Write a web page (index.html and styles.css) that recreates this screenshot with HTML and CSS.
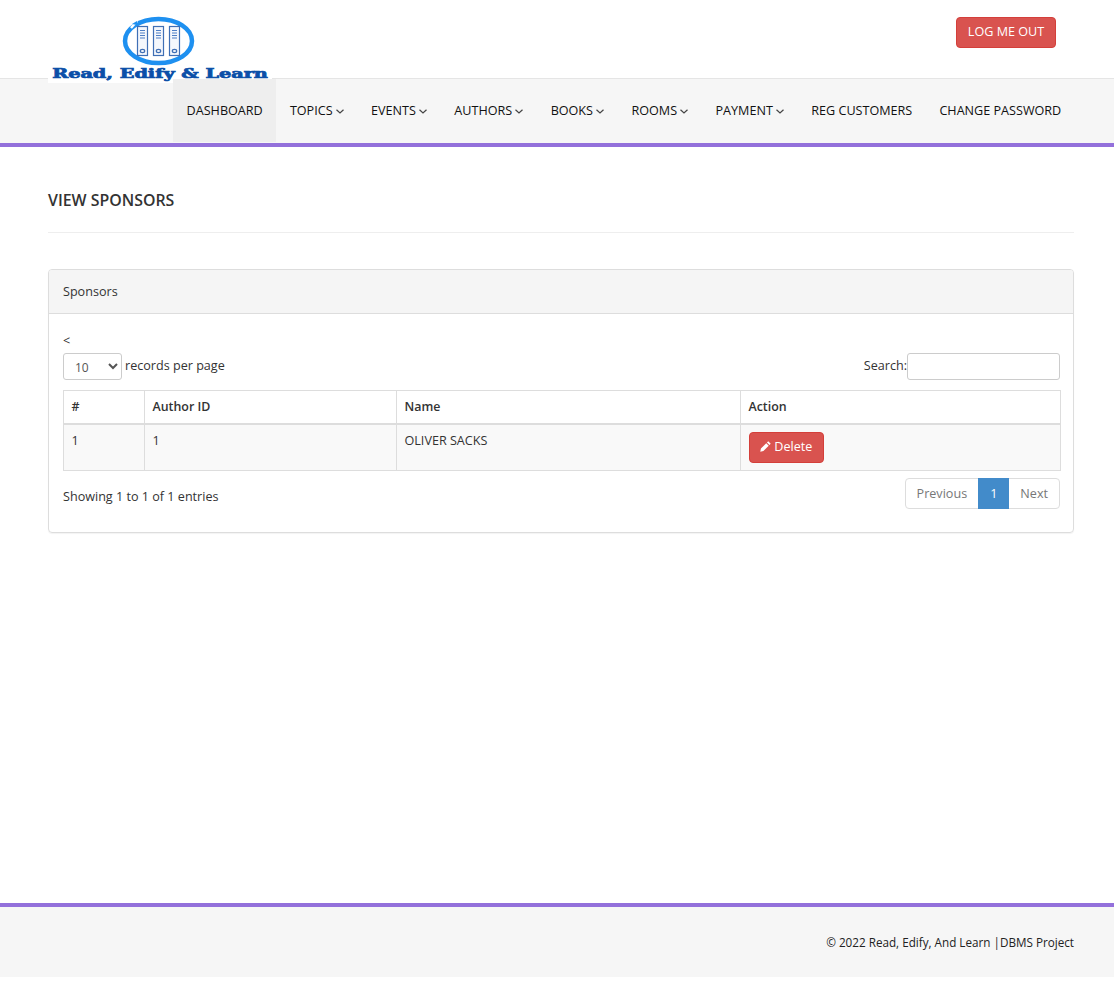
FILE: index.html

```html
<!DOCTYPE html>
<html>

<head>
    <title>View Sponsors</title>
    <link rel="stylesheet" href="styles.css">
</head>

<body>
    <!-- Logo and logout -->
    <header class="top-bar">
        <div class="logo">
            <svg class="logo-mark" width="74" height="52" viewBox="0 0 74 52">
                <ellipse cx="36.500" cy="25" rx="33.500" ry="22" fill="none" stroke="#1e90f0" stroke-width="4.500"/>
                <path d="M9 12 15 5" stroke="#fff" stroke-width="2.500"/>
                <path d="M10 8 15 5 15 9z" fill="#1e90f0"/>
                <g fill="#f4f7fc" stroke="#3f6fb5" stroke-width="1.200">
                    <rect x="15.500" y="10.500" width="10" height="29"/>
                    <rect x="31.500" y="10.500" width="10" height="29"/>
                    <rect x="47.500" y="10.500" width="10" height="29"/>
                </g>
                <g stroke="#4f7fc5" stroke-width="1">
                    <path d="M18 14.500h5M18 17h5M18 19.500h5M18 22h5"/>
                    <path d="M34 14.500h5M34 17h5M34 19.500h5M34 22h5"/>
                    <path d="M50 14.500h5M50 17h5M50 19.500h5M50 22h5"/>
                </g>
                <g fill="none" stroke="#3f6fb5" stroke-width="1.200">
                    <ellipse cx="20.500" cy="35" rx="2.200" ry="1.600"/>
                    <ellipse cx="36.500" cy="35" rx="2.200" ry="1.600"/>
                    <ellipse cx="52.500" cy="35" rx="2.200" ry="1.600"/>
                </g>
            </svg>
            <div class="logo-text">Read, Edify &amp; Learn</div>
        </div>
        <a class="btn btn-logout" href="#">LOG ME OUT</a>
    </header>

    <!-- Main menu -->
    <nav class="menu-bar">
        <ul class="menu">
            <li class="active"><a href="#">DASHBOARD</a></li>
            <li><a href="#">TOPICS <svg class="caret" width="8" height="5" viewBox="0 0 8 5"><path d="M.5.7 4 4 7.500.7" fill="none" stroke="#444" stroke-width="1.200"/></svg></a></li>
            <li><a href="#">EVENTS <svg class="caret" width="8" height="5" viewBox="0 0 8 5"><path d="M.5.7 4 4 7.500.7" fill="none" stroke="#444" stroke-width="1.200"/></svg></a></li>
            <li><a href="#">AUTHORS <svg class="caret" width="8" height="5" viewBox="0 0 8 5"><path d="M.5.7 4 4 7.500.7" fill="none" stroke="#444" stroke-width="1.200"/></svg></a></li>
            <li><a href="#">BOOKS <svg class="caret" width="8" height="5" viewBox="0 0 8 5"><path d="M.5.7 4 4 7.500.7" fill="none" stroke="#444" stroke-width="1.200"/></svg></a></li>
            <li><a href="#">ROOMS <svg class="caret" width="8" height="5" viewBox="0 0 8 5"><path d="M.5.7 4 4 7.500.7" fill="none" stroke="#444" stroke-width="1.200"/></svg></a></li>
            <li><a href="#">PAYMENT <svg class="caret" width="8" height="5" viewBox="0 0 8 5"><path d="M.5.7 4 4 7.500.7" fill="none" stroke="#444" stroke-width="1.200"/></svg></a></li>
            <li><a href="#">REG CUSTOMERS</a></li>
            <li><a href="#">CHANGE PASSWORD</a></li>
        </ul>
    </nav>

    <main class="content">
        <h4 class="page-title">VIEW SPONSORS</h4>

        <div class="panel">
            <div class="panel-heading">Sponsors</div>
            <div class="panel-body">
                <div class="stray">&lt;</div>

                <div class="table-tools">
                    <label class="length-label">
                        <select class="length-select">
                            <option>10</option>
                        </select>
                        <span class="length-text">records per page</span>
                    </label>
                    <label class="search-label">Search:<input type="text" class="search-input"></label>
                </div>

                <table class="data-table">
                    <thead>
                        <tr>
                            <th class="col-num">#</th>
                            <th class="col-id">Author ID</th>
                            <th class="col-name">Name</th>
                            <th>Action</th>
                        </tr>
                    </thead>
                    <tbody>
                        <tr>
                            <td>1</td>
                            <td>1</td>
                            <td>OLIVER SACKS</td>
                            <td>
                                <a class="btn btn-delete" href="#">
                                    <svg width="11" height="11" viewBox="0 0 12 12"><path d="M9 .3 11.700 3 10.300 4.400 7.600 1.700zM6.800 2.500 9.500 5.200 3.700 11 .3 11.700 1 8.300z" fill="#fff"/></svg>
                                    Delete
                                </a>
                            </td>
                        </tr>
                    </tbody>
                </table>

                <div class="table-footer">
                    <div class="table-info">Showing 1 to 1 of 1 entries</div>
                    <div class="pagination">
                        <a href="#">Previous</a>
                        <a class="current" href="#">1</a>
                        <a href="#">Next</a>
                    </div>
                </div>
            </div>
        </div>
    </main>

    <footer class="footer">
        <div class="footer-text">© 2022 Read, Edify, And Learn |DBMS Project</div>
    </footer>
</body>

</html>
```

FILE: styles.css

```css
/* Basic styling for the body */
body {
    margin: 0;
    font-family: "Open Sans", sans-serif;
    font-size: 12.600px;
    line-height: 20px;
    color: #333;
    background-color: #fff;
}

a {
    text-decoration: none;
    color: inherit;
}

/* Top bar with logo and logout */
.top-bar {
    position: relative;
    height: 78px;
    display: flex;
    justify-content: flex-end;
    align-items: flex-start;
    padding: 17px 58px 0 0;
    box-sizing: border-box;
}

.logo {
    position: absolute;
    left: 48px;
    top: 13px;
    width: 224px;
    height: 70px;
    background-color: #fff;
    z-index: 2;
}

.logo-mark {
    display: block;
    margin: 3px 0 0 74px;
}

.logo-text {
    margin-top: -2px;
    font-family: "DejaVu Serif", serif;
    font-weight: bold;
    font-size: 12.500px;
    line-height: 16px;
    text-align: center;
    color: #0b4fa8;
    -webkit-text-stroke: 0.7px #0b4fa8;
    white-space: nowrap;
    transform: scaleX(1.540);
}

.btn {
    display: inline-block;
    box-sizing: border-box;
    color: #fff;
    background-color: #d9534f;
    border: 1px solid #d43f3a;
    border-radius: 4px;
}

.btn-logout {
    width: 100px;
    height: 31px;
    line-height: 27px;
    text-align: center;
}

/* Main menu */
.menu-bar {
    height: 69px;
    box-sizing: border-box;
    background-color: #f6f6f6;
    border-top: 1px solid #e5e5e5;
    border-bottom: 4px solid #9370db;
    padding-left: 173px;
}

.menu {
    position: relative;
    z-index: 3;
    display: flex;
    margin: 0;
    padding: 0;
    list-style: none;
}

.menu a {
    display: block;
    height: 63px;
    line-height: 63px;
    padding: 0 13.600px;
    color: #111;
    white-space: nowrap;
}

.menu .active a {
    background-color: #eee;
}

.caret {
    vertical-align: 1px;
}

/* Page content */
.content {
    padding: 0 40px 0 48px;
    height: 756px;
    box-sizing: border-box;
}

.page-title {
    margin: 0 0 36px 0;
    padding: 42px 0 21px 0;
    font-size: 15.900px;
    line-height: 22px;
    font-weight: 600;
    color: #333;
    border-bottom: 1px solid #eee;
}

.panel {
    border: 1px solid #ddd;
    border-radius: 4px;
    box-shadow: 0 1px 1px rgba(0, 0, 0, 0.05);
}

.panel-heading {
    height: 43px;
    line-height: 43px;
    padding: 0 14px;
    background-color: #f5f5f5;
    border-bottom: 1px solid #ddd;
    border-radius: 3px 3px 0 0;
}

.panel-body {
    padding: 16px 13px 23px 14px;
}

.stray {
    height: 23px;
    line-height: 22px;
}

/* Table tools */
.table-tools {
    display: flex;
    justify-content: space-between;
    align-items: center;
    height: 27px;
    margin-bottom: 10px;
}

.length-label {
    display: flex;
    align-items: center;
    gap: 3px;
}

.length-text {
    margin-bottom: 2px;
}

.length-select {
    width: 59px;
    height: 27px;
    padding: 2px 7px 0 7px;
    font-family: "Open Sans", sans-serif;
    font-size: 12px;
    color: #555;
    background-color: #fff;
    border: 1px solid #ccc;
    border-radius: 3px;
}

.search-input {
    width: 153px;
    height: 27px;
    box-sizing: border-box;
    border: 1px solid #ccc;
    border-radius: 3px;
    vertical-align: middle;
}

/* Styling for the table */
.data-table {
    width: 998px;
    table-layout: fixed;
    border-collapse: collapse;
    border: 1px solid #ddd;
    text-align: left;
}

.data-table th,
.data-table td {
    padding: 6px 7.500px;
    border: 1px solid #ddd;
    vertical-align: top;
}

.data-table th {
    font-size: 12.400px;
    font-weight: 600;
    border-bottom-width: 2px;
    color: #333;
}

.data-table tbody tr {
    background-color: #f9f9f9;
}

.col-num {
    width: 65px;
}

.col-id {
    width: 236px;
}

.col-name {
    width: 328px;
}

.btn-delete {
    margin: 1px 0;
    height: 31px;
    line-height: 27px;
    padding: 0 10.500px;
    vertical-align: top;
}

.btn-delete svg {
    vertical-align: -1px;
}

/* Table footer */
.table-footer {
    display: flex;
    justify-content: space-between;
    align-items: flex-start;
    margin-top: 7px;
}

.table-info {
    padding-top: 9px;
}

.pagination {
    display: flex;
    height: 31px;
    box-sizing: border-box;
    border: 1px solid #ddd;
    border-radius: 4px;
}

.pagination a {
    padding: 0 11px;
    line-height: 29px;
    color: #777;
}

.pagination a.current {
    margin: -1px 0;
    line-height: 31px;
    padding: 0 12px;
    color: #fff;
    background-color: #428bca;
}

/* Footer */
.footer {
    height: 74px;
    box-sizing: border-box;
    background-color: #f6f6f6;
    border-top: 4px solid #9370db;
    padding: 25px 40px 0 48px;
}

.footer-text {
    font-size: 11.700px;
    text-align: right;
    color: #222;
}
```
